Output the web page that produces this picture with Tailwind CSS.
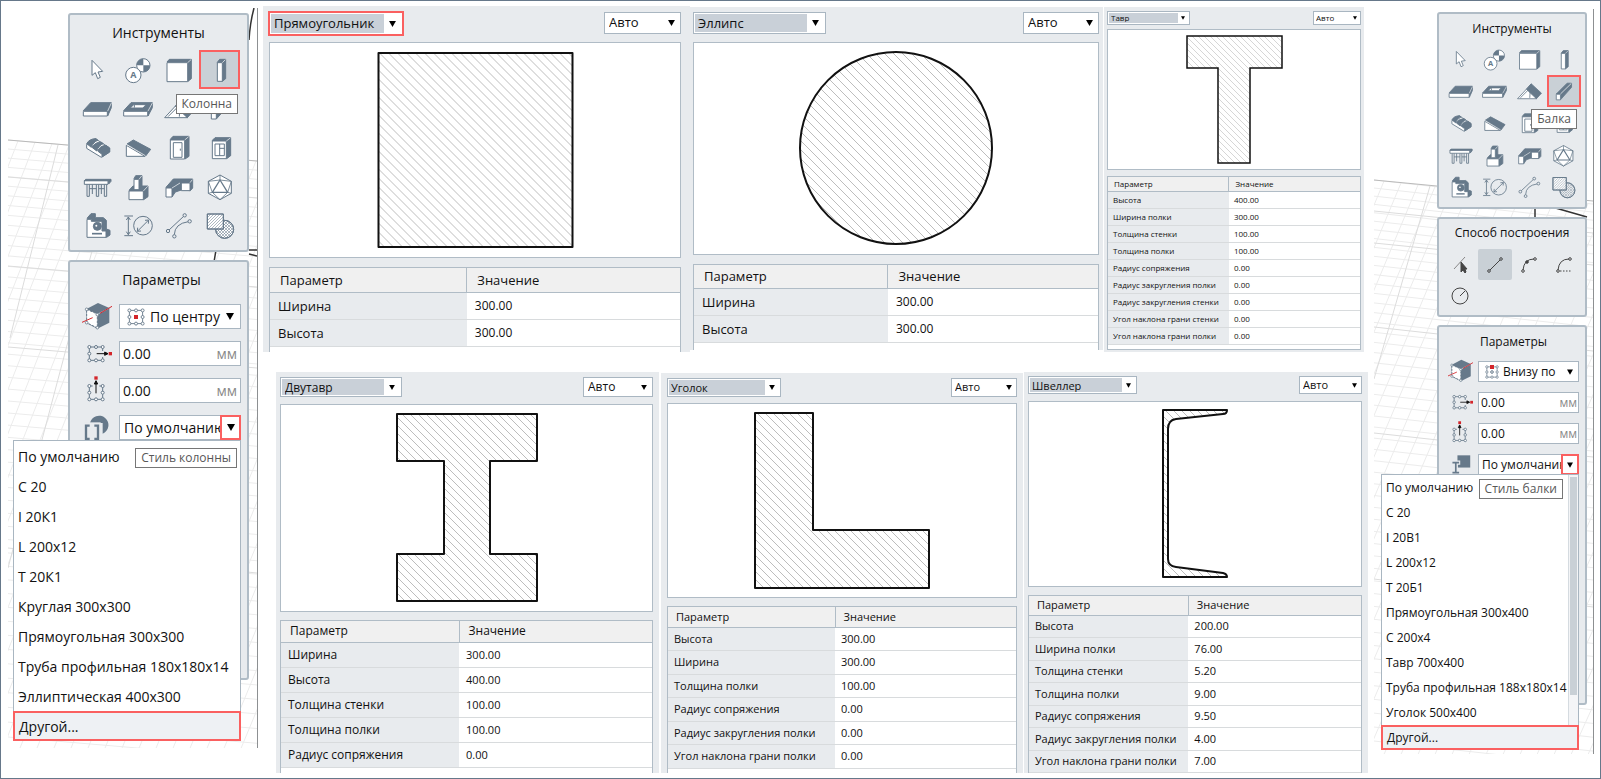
<!DOCTYPE html>
<html lang="ru">
<head>
<meta charset="utf-8">
<title>Стили колонн и балок</title>
<script src="https://cdn.jsdelivr.net/npm/@tailwindcss/browser@4"></script>
</head>
<body class="min-h-screen flex bg-white border border-[#66788a] font-['Open_Sans','Noto_Sans',sans-serif] text-[#111]">

<svg class="absolute size-0" aria-hidden="true">
  <defs>
    <pattern id="h9" width="9" height="9" patternUnits="userSpaceOnUse"><path d="M-1 -1L10 10M-1 8L1 10M8 -1L10 1" stroke="#bdbdbd" fill="none"/></pattern>
    <pattern id="h8" width="8" height="8" patternUnits="userSpaceOnUse"><path d="M-1 -1L9 9M-1 7L1 9M7 -1L9 1" stroke="#bdbdbd" fill="none"/></pattern>
    <pattern id="h6" width="6" height="6" patternUnits="userSpaceOnUse"><path d="M-1 -1L7 7M-1 5L1 7M5 -1L7 1" stroke="#ccc" fill="none" stroke-width=".8"/></pattern>
    <pattern id="ih" width="9" height="9" patternUnits="userSpaceOnUse"><path d="M-1 10L10 -1" stroke="#66798a" stroke-width="1.6"/></pattern>
    <pattern id="ix" width="9" height="9" patternUnits="userSpaceOnUse"><path d="M-1 10L10 -1M-1 -1L10 10" stroke="#66798a" stroke-width="1.6"/></pattern>
  </defs>
  <symbol id="cursor" viewBox="0 0 90 90" fill="#fff" stroke="#66798a" stroke-width="3" stroke-linejoin="round"><path d="M30 16V61L40 53L47 71L55 67L48 51L62 49Z"/></symbol>
  <symbol id="axis" viewBox="0 0 90 90" fill="#fff" stroke="#66798a" stroke-width="3" stroke-linejoin="round"><circle cx="61" cy="31" r="20"/><path d="M61 31V11A20 20 0 0 0 41 31ZM61 31V51A20 20 0 0 0 81 31Z" fill="#66798a" stroke="none"/><circle cx="31" cy="60" r="23"/><text x="31" y="70" font-size="27" font-weight="bold" text-anchor="middle" fill="#66798a" stroke="none">A</text></symbol>
  <symbol id="wall" viewBox="0 0 90 90" fill="#fff" stroke="#66798a" stroke-width="3" stroke-linejoin="round"><path fill="#66798a" d="M9 21L16 13H82V71L72 79V21Z"/><path d="M9 23H71V80H9Z"/><path d="M71 23L81 14" stroke="#fff" stroke-width="2"/></symbol>
  <symbol id="column" viewBox="0 0 90 90" fill="#fff" stroke="#66798a" stroke-width="3" stroke-linejoin="round"><path fill="#66798a" d="M37 22L44 13H62V71L52 79Z"/><path d="M37 23H52V79H37Z"/><path d="M52 23L61 14" stroke="#fff" stroke-width="2"/></symbol>
  <symbol id="slab" viewBox="0 0 90 90" fill="#fff" stroke="#66798a" stroke-width="3" stroke-linejoin="round"><path fill="#66798a" d="M4 50L26 26H88V41L77 66V51Z"/><path d="M4 52H76V66H4Z"/><path d="M77 51L88 27" stroke="#fff" stroke-width="2"/></symbol>
  <symbol id="opening" viewBox="0 0 90 90" fill="#fff" stroke="#66798a" stroke-width="3" stroke-linejoin="round"><path fill="#66798a" d="M2 50L24 26H88V41L75 66V51Z"/><path d="M2 52H74V66H2ZM22 42L32 32H69L60 42Z"/><path d="M34 33V41"/><path d="M75 51L88 27" stroke="#fff" stroke-width="2"/></symbol>
  <symbol id="roof" viewBox="0 0 90 90" fill="#fff" stroke="#66798a" stroke-width="3" stroke-linejoin="round"><path d="M2 71L51 18L70 71Z"/><path d="M12 68L48 32L46 68" fill="none"/><path fill="#66798a" d="M51 17L88 51L70 71L34 37Z"/></symbol>
  <symbol id="beam" viewBox="0 0 90 90" fill="#fff" stroke="#66798a" stroke-width="3" stroke-linejoin="round"><path fill="#66798a" d="M19 54L58 15H74V30L34 75V54Z"/><path d="M19 55H34V75H19Z"/><path d="M34 54L73 16" stroke-width="2.5" stroke="#fff"/></symbol>
  <symbol id="stairs" viewBox="0 0 90 90" fill="#fff" stroke="#66798a" stroke-width="3" stroke-linejoin="round"><path d="M14 34L14 46L58 73L83 57V45L40 17Z"/><path fill="#66798a" d="M14 32Q22 17 42 17L48 22Q34 26 28 43ZM30 43Q38 28 57 27L64 32Q50 37 44 54ZM47 54Q54 38 72 37L83 45V57L60 72V64Z"/></symbol>
  <symbol id="ramp" viewBox="0 0 90 90" fill="#fff" stroke="#66798a" stroke-width="3" stroke-linejoin="round"><path fill="#66798a" d="M12 33L31 21L83 49L68 69Z"/><path d="M10 37L66 70H10Z"/><path d="M12 35L67 68" stroke="#fff" stroke-width="2"/></symbol>
  <symbol id="door" viewBox="0 0 90 90" fill="#fff" stroke="#66798a" stroke-width="3" stroke-linejoin="round"><path fill="#66798a" d="M19 19L27 10H75V70L63 78Z"/><path d="M19 21H62V78H19Z"/><path d="M28 29H54V73H28ZM49 47V53"/><path d="M62 21L74 11" stroke="#fff" stroke-width="2"/></symbol>
  <symbol id="window" viewBox="0 0 90 90" fill="#fff" stroke="#66798a" stroke-width="3" stroke-linejoin="round"><path fill="#66798a" d="M22 22L30 14H77V68L65 77Z"/><path d="M22 24H64V77H22Z"/><path d="M30 33H58V68H30ZM44 33V68M44 46H58"/><path d="M64 24L76 15" stroke="#fff" stroke-width="2"/></symbol>
  <symbol id="railing" viewBox="0 0 90 90" fill="#fff" stroke="#66798a" stroke-width="3" stroke-linejoin="round"><path d="M15 37V73H22V37M43 37V73H50V37M67 37V73H74V37M31 37V66M58 37V66M22 50H43M50 50H67" fill="none"/><path d="M7 26H78V37H7Z"/><path fill="#66798a" d="M7 26L11 22H87V28L80 36V26Z"/></symbol>
  <symbol id="foundation" viewBox="0 0 90 90" fill="#fff" stroke="#66798a" stroke-width="3" stroke-linejoin="round"><path fill="#66798a" d="M18 55L30 42H75V74L62 83Z"/><path d="M18 57H61V83H18Z"/><path fill="#66798a" d="M33 20L38 11H57V44L48 52Z"/><path d="M33 22H48V53H33Z"/><path d="M61 57L74 43M48 22L56 12" stroke="#fff" stroke-width="2"/></symbol>
  <symbol id="duct" viewBox="0 0 90 90" fill="#fff" stroke="#66798a" stroke-width="3" stroke-linejoin="round"><path fill="#66798a" d="M6 46L28 21H86V48L79 56L52 54L34 60L24 75Z"/><path d="M6 48H24V75H6ZM52 33H78V56H52Z"/><path d="M24 48L48 33M78 32L85 23" stroke="#fff" stroke-width="2"/></symbol>
  <symbol id="solid" viewBox="0 0 90 90" fill="#fff" stroke="#66798a" stroke-width="3" stroke-linejoin="round"><path d="M45 9L79 28V64L45 83L10 64V28Z"/><path stroke-width="4" d="M45 24L68 61H22Z"/><path fill="none" stroke-width="2.5" d="M45 9V24L10 28L22 61L10 64M45 24L79 28L68 61L79 64M22 61L45 83L68 61"/></symbol>
  <symbol id="assembly" viewBox="0 0 90 90" fill="#fff" stroke="#66798a" stroke-width="3" stroke-linejoin="round"><path fill="#66798a" d="M15 22L27 8H40V20H64L73 28V54L84 58V72L74 79Z"/><path d="M15 25H28V31H60V60H72V79H15Z"/><circle cx="46" cy="46" r="12" fill="#66798a"/><path d="M30 68H60" stroke-width="5"/><circle cx="43" cy="44" r="3" stroke="none"/></symbol>
  <symbol id="dimension" viewBox="0 0 90 90" fill="none" stroke="#66798a" stroke-width="3"><path d="M4 15H30M4 74H30M16 18V71M10 27L16 18L22 27M10 62L16 71L22 62"/><circle cx="60" cy="44" r="28"/><path d="M43 61L77 27M44 50L43 61L54 60M66 28L77 27L76 38"/></symbol>
  <symbol id="spline" viewBox="0 0 90 90" fill="#e8ebee" stroke="#66798a" stroke-width="3"><path fill="none" d="M14 58L60 15M31 71Q32 38 73 32"/><circle cx="12" cy="60" r="5"/><circle cx="62" cy="13" r="5"/><circle cx="31" cy="76" r="5"/><circle cx="77" cy="31" r="5"/></symbol>
  <symbol id="hatching" viewBox="0 0 90 90" fill="#fff" stroke="#66798a" stroke-width="3" stroke-linejoin="round"><circle cx="59" cy="55" r="27"/><circle cx="59" cy="55" r="27" fill="url(#ix)"/><path d="M7 9H55V54H7Z"/><path fill="url(#ih)" d="M7 9H55V54H7Z"/></symbol>

  <symbol id="place" viewBox="0 0 90 90" fill="#fff" stroke="#66798a" stroke-width="3" stroke-linejoin="round"><path fill="#66798a" stroke="none" d="M12 22L48 3L82 18V62L46 80L14 64Z"/><path stroke="#e8ebee" stroke-width="2" fill="none" d="M48 36L81 19"/><path stroke-dasharray="7 4" d="M14 22L46 36V78L14 62Z"/><path stroke="#d3262b" d="M0 61L32 47M54 34L90 13"/><g stroke-width="2.5"><circle cx="14" cy="22" r="4"/><circle cx="46" cy="38" r="4"/><circle cx="46" cy="77" r="4"/><circle cx="14" cy="62" r="4"/></g></symbol>
  <symbol id="nodes" viewBox="0 0 60 60" fill="#fff" stroke="#66798a" stroke-width="3"><path fill="none" d="M8 8H52V52H8Z"/><circle cx="8" cy="8" r="5"/><circle cx="30" cy="8" r="5"/><circle cx="52" cy="8" r="5"/><circle cx="8" cy="30" r="5"/><circle cx="52" cy="30" r="5"/><circle cx="8" cy="52" r="5"/><circle cx="30" cy="52" r="5"/><circle cx="52" cy="52" r="5"/></symbol>
  <symbol id="shiftx" viewBox="0 0 90 90" fill="#fff" stroke="#66798a" stroke-width="3"><path fill="none" d="M22 24H62M22 24V64M22 64H62M62 24V36M62 54V64"/><circle cx="22" cy="24" r="4.5"/><circle cx="42" cy="24" r="4.5"/><circle cx="62" cy="24" r="4.5"/><circle cx="22" cy="44" r="4.5"/><circle cx="22" cy="64" r="4.5"/><circle cx="42" cy="64" r="4.5"/><circle cx="62" cy="64" r="4.5"/><path stroke="#111" fill="#111" d="M44 44H76M68 39L78 44L68 49Z"/><path stroke="none" fill="#d3262b" d="M80 39H90V49H80Z"/></symbol>
  <symbol id="shifty" viewBox="0 0 90 90" fill="#fff" stroke="#66798a" stroke-width="3"><path fill="none" d="M22 30H32M52 30H62M22 30V70M22 70H62V30"/><circle cx="22" cy="30" r="4.5"/><circle cx="62" cy="30" r="4.5"/><circle cx="22" cy="50" r="4.5"/><circle cx="62" cy="50" r="4.5"/><circle cx="22" cy="70" r="4.5"/><circle cx="42" cy="70" r="4.5"/><circle cx="62" cy="70" r="4.5"/><path stroke="#111" fill="#111" d="M42 52V16M37 24L42 14L47 24Z"/><path stroke="none" fill="#d3262b" d="M37 1H47V11H37Z"/></symbol>
  <symbol id="colstyle" viewBox="0 0 90 90"><path fill="#66798a" d="M24 30A28 28 0 1 1 62 62V30Z"/><path fill="#e8ebee" d="M4 28H56V90H4Z"/><path fill="none" stroke="#66798a" stroke-width="7" d="M23 38H12V78H23M37 38H48V78H37"/></symbol>
  <symbol id="beamstyle" viewBox="0 0 90 90"><path fill="#66798a" d="M34 12H80V56H34Z"/><path stroke="#e8ebee" stroke-width="15" fill="none" d="M12 38H44M28 38V74"/><path fill="none" stroke="#66798a" stroke-width="6" d="M16 38H40M28 38V74M16 74H40"/></symbol>
</svg>

<!-- Column tools -->
<section class="relative w-[250px] shrink-0 ml-[7px] mt-[7px] mb-[30px] pl-[60px] pr-[8px] pt-[5px] border-r border-[#8d9092] flex flex-col gap-[8px]">
  <svg class="absolute left-0 top-0 size-full" viewBox="0 0 249 740" preserveAspectRatio="none" aria-hidden="true">
    <path data-grid="132 0.085 9 249" fill="none" stroke="#ececec"/>
    <path d="M0 132L249 153" stroke="#b9b9b9" fill="none"/>
    <path d="M0 169L249 190M0 258L249 279M0 339L249 360M0 540L249 565M50 137L2 330M110 145L0 560" stroke="#dcdcdc" fill="none"/>
    <path d="M246 0Q242 15 241 32M208 242L206 254M241 242H249M241 246L249 248" stroke="#333" stroke-width="1.5" fill="none"/>
  </svg>
  <div class="relative rounded-[3px] border-2 border-[#b0bcc6] bg-[#e8ebee] px-[7px] pb-[5px]">
    <h2 class="h-[35px] leading-[36px] text-center text-[14px]">Инструменты</h2>
    <div class="grid grid-cols-4 [&>button]:h-[39px] [&>button]:flex [&>button]:items-center [&>button]:justify-center [&_svg]:size-[30px] [&_svg]:shrink-0">
      <button aria-label="Выбор"><svg><use href="#cursor"/></svg></button>
      <button aria-label="Ось"><svg><use href="#axis"/></svg></button>
      <button aria-label="Стена"><svg><use href="#wall"/></svg></button>
      <button aria-label="Колонна" class="border-2 border-[#fa6060] bg-[#c9d0d6]"><svg><use href="#column"/></svg></button>
      <button aria-label="Перекрытие"><svg><use href="#slab"/></svg></button>
      <button aria-label="Проем"><svg><use href="#opening"/></svg></button>
      <button aria-label="Крыша"><svg><use href="#roof"/></svg></button>
      <button aria-label="Балка"><svg><use href="#beam"/></svg></button>
      <button aria-label="Лестница"><svg><use href="#stairs"/></svg></button>
      <button aria-label="Пандус"><svg><use href="#ramp"/></svg></button>
      <button aria-label="Дверь"><svg><use href="#door"/></svg></button>
      <button aria-label="Окно"><svg><use href="#window"/></svg></button>
      <button aria-label="Ограждение"><svg><use href="#railing"/></svg></button>
      <button aria-label="Фундамент"><svg><use href="#foundation"/></svg></button>
      <button aria-label="Воздуховод"><svg><use href="#duct"/></svg></button>
      <button aria-label="Элемент"><svg><use href="#solid"/></svg></button>
      <button aria-label="Сборка"><svg><use href="#assembly"/></svg></button>
      <button aria-label="Размер"><svg><use href="#dimension"/></svg></button>
      <button aria-label="Сплайн"><svg><use href="#spline"/></svg></button>
      <button aria-label="Штриховка"><svg><use href="#hatching"/></svg></button>
    </div>
    <div role="tooltip" class="absolute right-[9px] top-[79px] h-[20px] px-[5px] border border-[#767676] bg-white text-[12px] leading-[18px] text-[#575757]">Колонна</div>
  </div>
  <div class="relative flex-1 mb-[68px] rounded-[3px] border-2 border-[#b0bcc6] bg-[#e8ebee] pl-[12px] pr-[6px]">
    <h2 class="h-[42px] leading-[36px] text-center text-[14px]">Параметры</h2>
    <div class="grid grid-cols-[37px_minmax(0,1fr)] gap-y-[12px] items-center text-[14px]">
      <svg class="size-[30px] -my-[3px]"><use href="#place"/></svg>
      <label class="h-[25px] flex items-center border border-[#a9b6c1] bg-white pl-[7px] pr-[6px]"><svg class="size-[18px] shrink-0"><use href="#nodes"/><path d="M7 7h4v4h-4z" fill="#d3262b"/></svg><select aria-label="Размещение" class="appearance-none flex-1 min-w-0 pl-[5px]"><option>По центру</option></select><svg class="w-[8px] h-[7px] ml-[5px] shrink-0" viewBox="0 0 8 7"><path d="M0 0H8L4 7Z"/></svg></label>
      <svg class="size-[30px] -my-[3px]"><use href="#shiftx"/></svg>
      <label class="h-[25px] flex items-center border border-[#a9b6c1] bg-white px-[3px]"><input aria-label="Смещение по горизонтали" class="flex-1 min-w-0" value="0.00"><span class="text-[#8a8a8a]">мм</span></label>
      <svg class="size-[30px] -my-[3px]"><use href="#shifty"/></svg>
      <label class="h-[25px] flex items-center border border-[#a9b6c1] bg-white px-[3px]"><input aria-label="Смещение по вертикали" class="flex-1 min-w-0" value="0.00"><span class="text-[#8a8a8a]">мм</span></label>
      <svg class="size-[30px] -my-[3px]"><use href="#colstyle"/></svg>
      <label class="h-[25px] flex items-center border border-[#a9b6c1] bg-white pl-[4px]"><select aria-label="Стиль колонны" class="appearance-none flex-1 min-w-0"><option>По умолчанию</option></select><span class="w-[21px] h-[25px] shrink-0 -mr-px flex items-center justify-center border-2 border-[#fa6060]"><svg class="w-[8px] h-[7px]" viewBox="0 0 8 7"><path d="M0 0H8L4 7Z"/></svg></span></label>
    </div>
    <div role="listbox" aria-label="Стили колонны" class="absolute -left-[57px] right-[6px] top-[178px] border border-[#a9b6c1] bg-white flex flex-col text-[14px] [&>button]:h-[30px] [&>button]:pl-[4px] [&>button]:text-left [&>button]:whitespace-nowrap">
      <button role="option">По умолчанию</button>
      <button role="option">С 20</button>
      <button role="option">I 20К1</button>
      <button role="option">L 200x12</button>
      <button role="option">T 20К1</button>
      <button role="option">Круглая 300x300</button>
      <button role="option">Прямоугольная 300x300</button>
      <button role="option">Труба профильная 180x180x14</button>
      <button role="option">Эллиптическая 400x300</button>
      <button role="option" class="-mx-px -mb-px border-2 border-[#fa6060] bg-[#eef1f4]">Другой...</button>
      <div role="tooltip" class="absolute right-[3px] top-[7px] h-[20px] px-[5px] border border-[#767676] bg-white text-[12px] leading-[18px] text-[#575757]">Стиль колонны</div>
    </div>
  </div>
</section>

<!-- Profile editors -->
<main class="flex-1 min-w-0 flex flex-col pt-[5px] pb-[5px] gap-[20px]">
  <div class="flex items-start h-[346px] ml-[5px] mr-[10px]">
    <section class="flex-[412] min-w-0 h-full bg-[#e8ebee] pl-[6px] pr-[9px] pt-[5px] flex flex-col text-[13px]">
      <div class="flex justify-between">
        <label class="-ml-px w-[136px] h-[25px] flex border-2 border-[#fa6060] bg-white p-px"><select aria-label="Профиль" class="appearance-none flex-1 min-w-0 bg-[#c9d0d8] pl-[3px]"><option>Прямоугольник</option></select><svg class="w-[7px] h-[6px] mx-[5px] self-center" viewBox="0 0 8 7"><path d="M0 0H8L4 7Z"/></svg></label>
        <label class="mt-px w-[77px] h-[22px] flex border border-[#a9b6c1] bg-white"><select aria-label="Масштаб" class="appearance-none flex-1 min-w-0 pl-[4px]"><option>Авто</option></select><svg class="w-[7px] h-[6px] mx-[5px] self-center" viewBox="0 0 8 7"><path d="M0 0H8L4 7Z"/></svg></label>
      </div>
      <div class="mt-[6px] border border-[#b0bcc6] bg-white"><svg class="block w-full h-[214px]" viewBox="0 0 409 214"><path d="M108 10H302V204H108Z" fill="url(#h9)" stroke="#111" stroke-width="2" stroke-linejoin="round"/></svg></div>
      <div class="mt-[9px] flex-1 overflow-hidden border border-b-0 border-[#b0bcc6] bg-white">
        <table class="w-full table-fixed border-collapse text-left leading-4 [&_th]:font-normal [&_thead_tr]:h-[24px] [&_thead_th]:bg-[#f0f0f0] [&_thead_th]:border-b [&_thead_th]:border-[#b0bcc6] [&_thead_th]:pl-[10px] [&_tbody_tr]:h-[27px] [&_tbody_tr]:border-b [&_tbody_tr]:border-[#d8dbdd] [&_tbody_th]:bg-[#e8ebee] [&_tbody_th]:pl-[8px] [&_td]:pl-[8px] [&_td]:text-[12px]">
          <thead><tr><th class="w-[48%] border-r">Параметр</th><th>Значение</th></tr></thead>
          <tbody><tr><th>Ширина</th><td>300.00</td></tr><tr><th>Высота</th><td>300.00</td></tr></tbody>
        </table>
      </div>
    </section>
    <section class="flex-[406] min-w-0 mt-px h-[343px] bg-[#e8ebee] pl-[3px] pr-[4px] pt-[5px] flex flex-col text-[13px]">
      <div class="flex justify-between">
        <label class="w-[133px] h-[22px] flex border border-[#a9b6c1] bg-white p-px"><select aria-label="Профиль" class="appearance-none flex-1 min-w-0 bg-[#c9d0d8] pl-[3px]"><option>Эллипс</option></select><svg class="w-[7px] h-[6px] mx-[5px] self-center" viewBox="0 0 8 7"><path d="M0 0H8L4 7Z"/></svg></label>
        <label class="w-[76px] h-[22px] flex border border-[#a9b6c1] bg-white"><select aria-label="Масштаб" class="appearance-none flex-1 min-w-0 pl-[4px]"><option>Авто</option></select><svg class="w-[7px] h-[6px] mx-[5px] self-center" viewBox="0 0 8 7"><path d="M0 0H8L4 7Z"/></svg></label>
      </div>
      <div class="mt-[8px] border border-[#b0bcc6] bg-white"><svg class="block w-full h-[211px]" viewBox="0 0 404 211"><circle cx="202" cy="105" r="96" fill="url(#h9)" stroke="#111" stroke-width="2"/></svg></div>
      <div class="mt-[9px] flex-1 overflow-hidden border border-b-0 border-[#b0bcc6] bg-white">
        <table class="w-full table-fixed border-collapse text-left leading-4 [&_th]:font-normal [&_thead_tr]:h-[23px] [&_thead_th]:bg-[#f0f0f0] [&_thead_th]:border-b [&_thead_th]:border-[#b0bcc6] [&_thead_th]:pl-[10px] [&_tbody_tr]:h-[27px] [&_tbody_tr]:border-b [&_tbody_tr]:border-[#d8dbdd] [&_tbody_th]:bg-[#e8ebee] [&_tbody_th]:pl-[8px] [&_td]:pl-[8px] [&_td]:text-[12px]">
          <thead><tr><th class="w-[48%] border-r">Параметр</th><th>Значение</th></tr></thead>
          <tbody><tr><th>Ширина</th><td>300.00</td></tr><tr><th>Высота</th><td>300.00</td></tr></tbody>
        </table>
      </div>
    </section>
    <section class="flex-[254] min-w-0 ml-px mt-px h-[345px] bg-[#e8ebee] px-[3px] pt-[4px] pb-[2px] flex flex-col text-[8px]">
      <div class="flex justify-between">
        <label class="w-[83px] h-[14px] flex border border-[#a9b6c1] bg-white p-px"><select aria-label="Профиль" class="appearance-none flex-1 min-w-0 bg-[#c9d0d8] pl-[2px] leading-none"><option>Тавр</option></select><svg class="w-[4px] h-[4px] mx-[3px] self-center" viewBox="0 0 8 7"><path d="M0 0H8L4 7Z"/></svg></label>
        <label class="w-[48px] h-[14px] flex border border-[#a9b6c1] bg-white"><select aria-label="Масштаб" class="appearance-none flex-1 min-w-0 pl-[2px]"><option>Авто</option></select><svg class="w-[4px] h-[4px] mx-[3px] self-center" viewBox="0 0 8 7"><path d="M0 0H8L4 7Z"/></svg></label>
      </div>
      <div class="mt-[4px] border border-[#b0bcc6] bg-white"><svg class="block w-full h-[139px]" viewBox="0 0 252 139"><path d="M79 6H174V38H142V133H110V38H79Z" fill="url(#h6)" stroke="#111" stroke-width="1.5"/></svg></div>
      <div class="mt-[6px] flex-1 overflow-hidden border border-[#b0bcc6] bg-white">
        <table class="w-full table-fixed border-collapse text-left leading-3 [&_th]:font-normal [&_thead_tr]:h-[14px] [&_thead_th]:bg-[#f0f0f0] [&_thead_th]:border-b [&_thead_th]:border-[#b0bcc6] [&_thead_th]:pl-[6px] [&_tbody_tr]:h-[17px] [&_tbody_tr]:border-b [&_tbody_tr]:border-[#d8dbdd] [&_tbody_th]:bg-[#e8ebee] [&_tbody_th]:pl-[5px] [&_td]:pl-[5px]">
          <thead><tr><th class="w-[48%] border-r">Параметр</th><th>Значение</th></tr></thead>
          <tbody><tr><th>Высота</th><td>400.00</td></tr><tr><th>Ширина полки</th><td>300.00</td></tr><tr><th>Толщина стенки</th><td>100.00</td></tr><tr><th>Толщина полки</th><td>100.00</td></tr><tr><th>Радиус сопряжения</th><td>0.00</td></tr><tr><th>Радиус закругления полки</th><td>0.00</td></tr><tr><th>Радиус закругления стенки</th><td>0.00</td></tr><tr><th>Угол наклона грани стенки</th><td>0.00</td></tr><tr><th>Угол наклона грани полки</th><td>0.00</td></tr></tbody>
        </table>
      </div>
    </section>
  </div>

  <div class="flex flex-1 ml-[18px] mr-[6px]">
    <section class="flex-[373] min-w-0 bg-[#e8ebee] pl-[4px] pr-[6px] pt-[5px] flex flex-col text-[12px]">
      <div class="flex justify-between">
        <label class="w-[122px] h-[20px] flex border border-[#a9b6c1] bg-white p-px"><select aria-label="Профиль" class="appearance-none flex-1 min-w-0 bg-[#c9d0d8] pl-[3px]"><option>Двутавр</option></select><svg class="w-[6px] h-[5px] mx-[5px] self-center" viewBox="0 0 8 7"><path d="M0 0H8L4 7Z"/></svg></label>
        <label class="w-[70px] h-[20px] flex border border-[#a9b6c1] bg-white"><select aria-label="Масштаб" class="appearance-none flex-1 min-w-0 pl-[4px]"><option>Авто</option></select><svg class="w-[6px] h-[5px] mx-[5px] self-center" viewBox="0 0 8 7"><path d="M0 0H8L4 7Z"/></svg></label>
      </div>
      <div class="mt-[7px] border border-[#b0bcc6] bg-white"><svg class="block w-full h-[206px]" viewBox="0 0 371 206"><path d="M116 9H256V56H209V149H256V196H116V149H163V56H116Z" fill="url(#h8)" stroke="#111" stroke-width="2" stroke-linejoin="round"/></svg></div>
      <div class="mt-[8px] flex-1 overflow-hidden border border-b-0 border-[#b0bcc6] bg-white">
        <table class="w-full table-fixed border-collapse text-left leading-4 [&_th]:font-normal [&_thead_tr]:h-[21px] [&_thead_th]:bg-[#f0f0f0] [&_thead_th]:border-b [&_thead_th]:border-[#b0bcc6] [&_thead_th]:pl-[9px] [&_tbody_tr]:h-[25px] [&_tbody_tr]:border-b [&_tbody_tr]:border-[#d8dbdd] [&_tbody_th]:bg-[#e8ebee] [&_tbody_th]:pl-[7px] [&_td]:pl-[7px] [&_td]:text-[11px]">
          <thead><tr><th class="w-[48%] border-r">Параметр</th><th>Значение</th></tr></thead>
          <tbody><tr><th>Ширина</th><td>300.00</td></tr><tr><th>Высота</th><td>400.00</td></tr><tr><th>Толщина стенки</th><td>100.00</td></tr><tr><th>Толщина полки</th><td>100.00</td></tr><tr><th>Радиус сопряжения</th><td>0.00</td></tr></tbody>
        </table>
      </div>
    </section>
    <section class="flex-[350] min-w-0 ml-[2px] mt-px bg-[#e8ebee] px-[6px] pt-[5px] flex flex-col text-[11px]">
      <div class="flex justify-between">
        <label class="w-[114px] h-[19px] flex border border-[#a9b6c1] bg-white p-px"><select aria-label="Профиль" class="appearance-none flex-1 min-w-0 bg-[#c9d0d8] pl-[2px]"><option>Уголок</option></select><svg class="w-[6px] h-[5px] mx-[4px] self-center" viewBox="0 0 8 7"><path d="M0 0H8L4 7Z"/></svg></label>
        <label class="w-[66px] h-[19px] flex border border-[#a9b6c1] bg-white"><select aria-label="Масштаб" class="appearance-none flex-1 min-w-0 pl-[3px]"><option>Авто</option></select><svg class="w-[6px] h-[5px] mx-[4px] self-center" viewBox="0 0 8 7"><path d="M0 0H8L4 7Z"/></svg></label>
      </div>
      <div class="mt-[6px] border border-[#b0bcc6] bg-white"><svg class="block w-full h-[193px]" viewBox="0 0 348 193"><path d="M87 9H145V126H261V184H87Z" fill="url(#h8)" stroke="#111" stroke-width="2" stroke-linejoin="round"/></svg></div>
      <div class="mt-[8px] flex-1 overflow-hidden border border-b-0 border-[#b0bcc6] bg-white">
        <table class="w-full table-fixed border-collapse text-left leading-4 [&_th]:font-normal [&_thead_tr]:h-[20px] [&_thead_th]:bg-[#f0f0f0] [&_thead_th]:border-b [&_thead_th]:border-[#b0bcc6] [&_thead_th]:pl-[8px] [&_tbody_tr]:h-[23px] [&_tbody_tr:nth-child(even)]:h-[24px] [&_tbody_tr]:border-b [&_tbody_tr]:border-[#d8dbdd] [&_tbody_th]:bg-[#e8ebee] [&_tbody_th]:pl-[6px] [&_td]:pl-[6px]">
          <thead><tr><th class="w-[48%] border-r">Параметр</th><th>Значение</th></tr></thead>
          <tbody><tr><th>Высота</th><td>300.00</td></tr><tr><th>Ширина</th><td>300.00</td></tr><tr><th>Толщина полки</th><td>100.00</td></tr><tr><th>Радиус сопряжения</th><td>0.00</td></tr><tr><th>Радиус закругления полки</th><td>0.00</td></tr><tr><th>Угол наклона грани полки</th><td>0.00</td></tr></tbody>
        </table>
      </div>
    </section>
    <section class="flex-[334] min-w-0 ml-px bg-[#e8ebee] pl-[4px] pr-[6px] pt-[4px] flex flex-col text-[11px]">
      <div class="flex justify-between">
        <label class="w-[109px] h-[18px] flex border border-[#a9b6c1] bg-white p-px"><select aria-label="Профиль" class="appearance-none flex-1 min-w-0 bg-[#c9d0d8] pl-[2px]"><option>Швеллер</option></select><svg class="w-[5px] h-[5px] mx-[4px] self-center" viewBox="0 0 8 7"><path d="M0 0H8L4 7Z"/></svg></label>
        <label class="w-[63px] h-[18px] flex border border-[#a9b6c1] bg-white"><select aria-label="Масштаб" class="appearance-none flex-1 min-w-0 pl-[3px]"><option>Авто</option></select><svg class="w-[5px] h-[5px] mx-[4px] self-center" viewBox="0 0 8 7"><path d="M0 0H8L4 7Z"/></svg></label>
      </div>
      <div class="mt-[7px] border border-[#b0bcc6] bg-white"><svg class="block w-full h-[184px]" viewBox="0 0 332 184"><path d="M134 8H198Q198 12 194 12L147 17Q139 18 139 27V157Q139 164 147 165L194 171Q198 172 198 175H134Z" fill="url(#h8)" stroke="#111" stroke-width="2" stroke-linejoin="round"/></svg></div>
      <div class="mt-[8px] flex-1 overflow-hidden border border-b-0 border-[#b0bcc6] bg-white">
        <table class="w-full table-fixed border-collapse text-left leading-4 [&_th]:font-normal [&_thead_tr]:h-[19px] [&_thead_th]:bg-[#f0f0f0] [&_thead_th]:border-b [&_thead_th]:border-[#b0bcc6] [&_thead_th]:pl-[8px] [&_tbody_tr]:h-[22px] [&_tbody_tr:nth-child(even)]:h-[23px] [&_tbody_tr]:border-b [&_tbody_tr]:border-[#d8dbdd] [&_tbody_th]:bg-[#e8ebee] [&_tbody_th]:pl-[6px] [&_td]:pl-[6px]">
          <thead><tr><th class="w-[48%] border-r">Параметр</th><th>Значение</th></tr></thead>
          <tbody><tr><th>Высота</th><td>200.00</td></tr><tr><th>Ширина полки</th><td>76.00</td></tr><tr><th>Толщина стенки</th><td>5.20</td></tr><tr><th>Толщина полки</th><td>9.00</td></tr><tr><th>Радиус сопряжения</th><td>9.50</td></tr><tr><th>Радиус закругления полки</th><td>4.00</td></tr><tr><th>Угол наклона грани полки</th><td>7.00</td></tr></tbody>
        </table>
      </div>
    </section>
  </div>
</main>

<!-- Beam tools -->
<section class="relative w-[220px] shrink-0 mr-[6px] mt-[8px] mb-[24px] pl-[63px] pr-[6px] pt-[3px] border-r border-[#8d9092] flex flex-col gap-[8px]">
  <svg class="absolute left-0 top-0 size-full" viewBox="0 0 219 745" preserveAspectRatio="none" aria-hidden="true">
    <path data-grid="171 0.11 8 219" fill="none" stroke="#ececec"/>
    <path d="M0 171L219 192" stroke="#b9b9b9" fill="none"/>
    <path d="M0 202L219 224M0 234L219 256M0 318L219 342M0 424L219 448M0 570L219 598M56 177L0 370" stroke="#dcdcdc" fill="none"/>
    <path d="M161 198V210M178 198L213 208" stroke="#333" stroke-width="1.5" fill="none"/>
  </svg>
  <div class="relative rounded-[3px] border-2 border-[#b0bcc6] bg-[#e8ebee] px-[4px] pb-[4px]">
    <h2 class="h-[29px] leading-[30px] text-center text-[12px]">Инструменты</h2>
    <div class="grid grid-cols-4 [&>button]:h-[32px] [&>button]:flex [&>button]:items-center [&>button]:justify-center [&_svg]:size-[25px]">
      <button aria-label="Выбор"><svg><use href="#cursor"/></svg></button>
      <button aria-label="Ось"><svg><use href="#axis"/></svg></button>
      <button aria-label="Стена"><svg><use href="#wall"/></svg></button>
      <button aria-label="Колонна"><svg><use href="#column"/></svg></button>
      <button aria-label="Перекрытие"><svg><use href="#slab"/></svg></button>
      <button aria-label="Проем"><svg><use href="#opening"/></svg></button>
      <button aria-label="Крыша"><svg><use href="#roof"/></svg></button>
      <button aria-label="Балка" class="border-2 border-[#fa6060] bg-[#c9d0d6]"><svg><use href="#beam"/></svg></button>
      <button aria-label="Лестница"><svg><use href="#stairs"/></svg></button>
      <button aria-label="Пандус"><svg><use href="#ramp"/></svg></button>
      <button aria-label="Дверь"><svg><use href="#door"/></svg></button>
      <button aria-label="Окно"><svg><use href="#window"/></svg></button>
      <button aria-label="Ограждение"><svg><use href="#railing"/></svg></button>
      <button aria-label="Фундамент"><svg><use href="#foundation"/></svg></button>
      <button aria-label="Воздуховод"><svg><use href="#duct"/></svg></button>
      <button aria-label="Элемент"><svg><use href="#solid"/></svg></button>
      <button aria-label="Сборка"><svg><use href="#assembly"/></svg></button>
      <button aria-label="Размер"><svg><use href="#dimension"/></svg></button>
      <button aria-label="Сплайн"><svg><use href="#spline"/></svg></button>
      <button aria-label="Штриховка"><svg><use href="#hatching"/></svg></button>
    </div>
    <div role="tooltip" class="absolute right-[8px] top-[95px] h-[20px] px-[5px] border border-[#767676] bg-white text-[12px] leading-[18px] text-[#575757]">Балка</div>
  </div>
  <div class="relative rounded-[3px] border-2 border-[#b0bcc6] bg-[#e8ebee] px-[4px] pb-[4px]">
    <h2 class="h-[30px] leading-[28px] text-center text-[12px]">Способ построения</h2>
    <div class="grid grid-cols-4 [&>button]:h-[31px] [&>button]:flex [&>button]:items-center [&>button]:justify-center [&_svg]:size-[20px] [&_svg]:fill-none [&_svg]:stroke-[#444]">
      <button aria-label="По объекту"><svg viewBox="0 0 20 20"><path d="M4 14L15 2" stroke="#888"/><path d="M11 7V17L13 15L15 18L16 17L15 14H17Z" fill="#444"/></svg></button>
      <button aria-label="Отрезок" class="rounded-[2px] bg-[#c9d0d6]"><svg viewBox="0 0 20 20"><path d="M5 15L15 5"/><circle cx="4" cy="16" r="1.3"/><circle cx="16" cy="4" r="1.3"/></svg></button>
      <button aria-label="Дуга по трем точкам"><svg viewBox="0 0 20 20"><path d="M4 15Q5 4 15 4"/><circle cx="4" cy="16" r="1.3"/><circle cx="8" cy="7" r="1.3" fill="#444"/><circle cx="16" cy="4" r="1.3"/></svg></button>
      <button aria-label="Касательная дуга"><svg viewBox="0 0 20 20"><path d="M4 15Q5 4 15 4"/><path d="M6 16H17" stroke-dasharray="1.5 1.5"/><circle cx="4" cy="16" r="1.3"/><circle cx="16" cy="4" r="1.3"/></svg></button>
      <button aria-label="Окружность"><svg viewBox="0 0 20 20"><circle cx="10" cy="10" r="8"/><path d="M10 10L15 5"/></svg></button>
    </div>
  </div>
  <div class="relative flex-1 mb-[49px] rounded-[3px] border-2 border-[#b0bcc6] bg-[#e8ebee] pl-[9px] pr-[6px]">
    <h2 class="h-[34px] leading-[30px] text-center text-[12px]">Параметры</h2>
    <div class="grid grid-cols-[30px_minmax(0,1fr)] gap-y-[10px] items-center text-[12px]">
      <svg class="size-[25px] -my-[3px]"><use href="#place"/></svg>
      <label class="h-[21px] flex items-center border border-[#a9b6c1] bg-white pl-[6px] pr-[5px]"><svg class="size-[14px] shrink-0" viewBox="0 0 14 14"><use href="#nodes"/><path d="M5 0h4v4h-4z" fill="#d3262b"/><circle cx="7" cy="7" r="1.3" fill="none" stroke="#66798a"/></svg><select aria-label="Размещение" class="appearance-none flex-1 min-w-0 pl-[4px]"><option>Внизу по центру</option></select><svg class="w-[6px] h-[6px] ml-[8px] shrink-0" viewBox="0 0 8 7"><path d="M0 0H8L4 7Z"/></svg></label>
      <svg class="size-[25px] -my-[3px]"><use href="#shiftx"/></svg>
      <label class="h-[21px] flex items-center border border-[#a9b6c1] bg-white pl-[2px] pr-px"><input aria-label="Смещение по горизонтали" class="flex-1 min-w-0" value="0.00"><span class="text-[#8a8a8a]">мм</span></label>
      <svg class="size-[25px] -my-[3px]"><use href="#shifty"/></svg>
      <label class="h-[21px] flex items-center border border-[#a9b6c1] bg-white pl-[2px] pr-px"><input aria-label="Смещение по вертикали" class="flex-1 min-w-0" value="0.00"><span class="text-[#8a8a8a]">мм</span></label>
      <svg class="size-[25px] -my-[3px]"><use href="#beamstyle"/></svg>
      <label class="h-[21px] flex items-center border border-[#a9b6c1] bg-white pl-[3px]"><select aria-label="Стиль балки" class="appearance-none flex-1 min-w-0"><option>По умолчанию</option></select><span class="w-[18px] h-[21px] shrink-0 -mr-px flex items-center justify-center border-2 border-[#fa6060]"><svg class="w-[6px] h-[6px]" viewBox="0 0 8 7"><path d="M0 0H8L4 7Z"/></svg></span></label>
    </div>
    <div role="listbox" aria-label="Стили балки" class="absolute -left-[58px] right-[6px] top-[147px] border border-[#a9b6c1] bg-white flex flex-col text-[12px] [&>button]:h-[25px] even:[&>button]:h-[24px] [&>button]:pl-[4px] [&>button]:text-left [&>button]:whitespace-nowrap">
      <button role="option">По умолчанию</button>
      <button role="option">С 20</button>
      <button role="option">I 20В1</button>
      <button role="option">L 200x12</button>
      <button role="option">T 20Б1</button>
      <button role="option">Прямоугольная 300x400</button>
      <button role="option">С 200x4</button>
      <button role="option">Тавр 700x400</button>
      <button role="option">Труба профильная 188x180x14</button>
      <button role="option">Уголок 500x400</button>
      <button role="option" class="relative z-10 -mx-px -mb-px border-2 border-[#fa6060] bg-[#eef1f4]">Другой...</button>
      <div class="absolute right-0 top-0 bottom-0 w-[10px] border-l border-[#d5dbe0] bg-[#f4f5f7] px-px pt-[2px]"><div class="h-[80%] bg-[#c9d0d6]"></div></div>
      <div role="tooltip" class="absolute right-[15px] top-[4px] h-[20px] px-[5px] border border-[#767676] bg-white text-[12px] leading-[18px] text-[#575757]">Стиль балки</div>
    </div>
  </div>
</section>

<script>
  // Fills each scene with a perspective floor grid below its horizon.
  document.querySelectorAll('[data-grid]').forEach(function (p) {
    var a = p.dataset.grid.split(' ').map(Number), d = '';
    for (var y = a[0], s = a[2]; y < 750; y += s, s += 0.12) d += 'M0 ' + y + 'L' + a[3] + ' ' + (y + a[1] * a[3]);
    for (var x = 10; x < 520; x += 17) d += 'M' + x + ' ' + (a[0] + x * a[1]) + 'L' + (x - 240) + ' 750';
    p.setAttribute('d', d);
  });
</script>
</body>
</html>
